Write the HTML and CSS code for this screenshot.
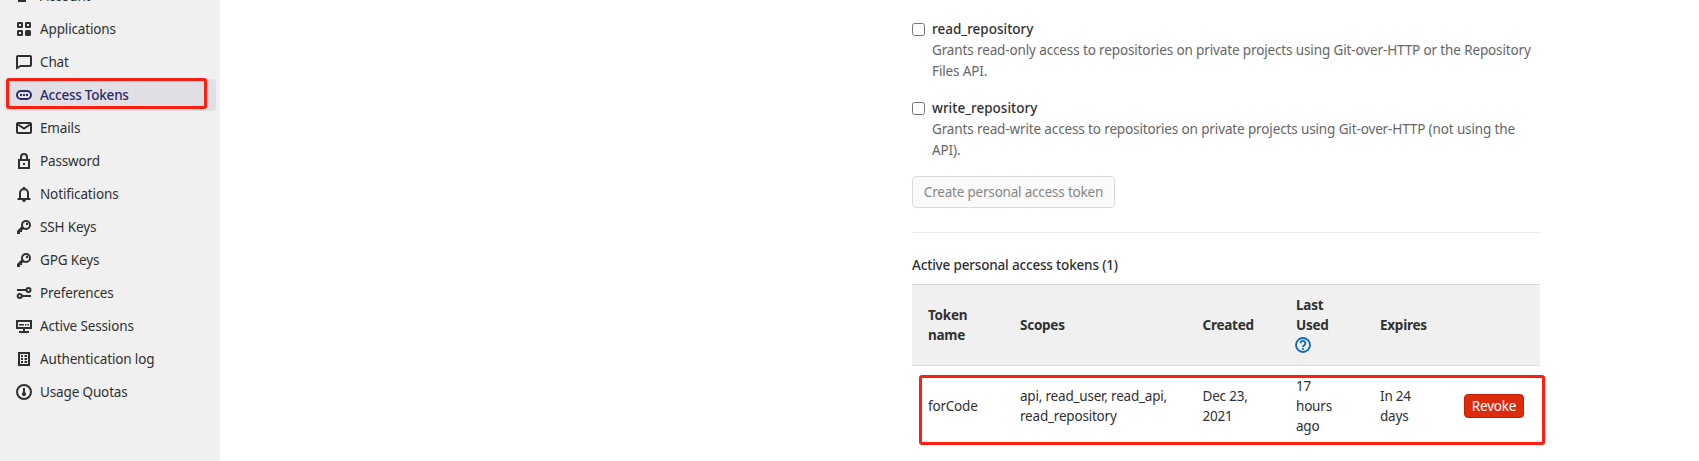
FILE: index.html
```html
<!DOCTYPE html>
<html lang="en">
<head>
<meta charset="utf-8">
<title>Access Tokens</title>
<link rel="stylesheet" href="styles.css">
</head>
<body>
<div class="page">
  <nav class="sidebar">
    <a class="nav-item"><svg class="icon" viewBox="0 0 16 16"><path d="M2 14v-1.500a4 4 0 0 1 4-3.500h4v5z" fill="currentColor"/><circle cx="6" cy="5" r="3" class="line"/></svg><span>Account</span></a>
    <a class="nav-item"><svg class="icon" viewBox="0 0 16 16"><g class="line"><rect x="2" y="2" width="4" height="4" rx=".3"/><rect x="10" y="2" width="4" height="4" rx=".3"/><rect x="2" y="10" width="4" height="4" rx=".3"/></g><rect x="9" y="9" width="6" height="6" rx="1.500" fill="currentColor"/></svg><span>Applications</span></a>
    <a class="nav-item"><svg class="icon" viewBox="0 0 16 16"><path class="line" d="M1 14V3a1 1 0 0 1 1-1h12a1 1 0 0 1 1 1v8a1 1 0 0 1-1 1H4.500z"/></svg><span>Chat</span></a>
    <a class="nav-item active"><svg class="icon" viewBox="0 0 16 16"><rect class="line" x="1" y="4" width="14" height="8" rx="4"/><path d="M4 7h2v2H4zM7 7h2v2H7zM10 7h2v2h-2z" fill="currentColor"/></svg><span>Access Tokens</span></a>
    <a class="nav-item"><svg class="icon" viewBox="0 0 16 16"><rect class="line" x="1" y="3" width="14" height="10" rx="1"/><path class="line" d="M2 4.500 8 8.500 14 4.500"/></svg><span>Emails</span></a>
    <a class="nav-item"><svg class="icon" viewBox="0 0 16 16"><path class="line" d="M3 7h10v8H3zM5 7V4a3 3 0 0 1 6 0v3"/><rect x="7" y="10" width="2" height="2" fill="currentColor"/></svg><span>Password</span></a>
    <a class="nav-item"><svg class="icon" viewBox="0 0 16 16"><path class="line" d="M4 12.500V7a4 4 0 0 1 8 0v5.500M1.500 13h13"/><path d="M7 1h2v2H7zM6 14h4a2 2 0 0 1-4 0" fill="currentColor"/></svg><span>Notifications</span></a>
    <a class="nav-item"><svg class="icon" viewBox="0 0 16 16"><circle class="line" cx="10" cy="6" r="4"/><path d="M6 7 1 12v3h3v-2h2v-2l3-1z" fill="currentColor"/><circle cx="11" cy="5" r="1.200" fill="currentColor"/></svg><span>SSH Keys</span></a>
    <a class="nav-item"><svg class="icon" viewBox="0 0 16 16"><circle class="line" cx="10" cy="6" r="4"/><path d="M6 7 1 12v3h3v-2h2v-2l3-1z" fill="currentColor"/><circle cx="11" cy="5" r="1.200" fill="currentColor"/></svg><span>GPG Keys</span></a>
    <a class="nav-item"><svg class="icon" viewBox="0 0 16 16"><g class="line"><circle cx="12.500" cy="5" r="2"/><circle cx="3.700" cy="11" r="2"/><path d="M1 5h9.700M5.500 11H15"/></g></svg><span>Preferences</span></a>
    <a class="nav-item"><svg class="icon" viewBox="0 0 16 16"><path class="line" d="M1 3h14v7H1zM8 10v4M3 14h10"/><path d="M3 6h5v1.500H3zM9 6h1.500v1.500H9zM11.500 6H13v1.500h-1.500z" fill="currentColor"/></svg><span>Active Sessions</span></a>
    <a class="nav-item"><svg class="icon" viewBox="0 0 16 16"><rect class="line" x="3" y="2" width="10" height="12"/><path d="M5 4h2v2H5zM8.500 4H11v2H8.500zM5 7h2v2H5zM8.500 7H11v2H8.500zM5 10h2v2H5zM8.500 10H11v2H8.500z" fill="currentColor"/></svg><span>Authentication log</span></a>
    <a class="nav-item"><svg class="icon" viewBox="0 0 16 16"><circle class="line" cx="8" cy="8" r="7"/><path d="M7 4h2v4.300a2 2 0 1 1-2 0z" fill="currentColor"/></svg><span>Usage Quotas</span></a>
    <div class="mark mark-nav"></div>
  </nav>
  <main class="content">
    <div class="scope">
      <input type="checkbox" class="check">
      <div><div class="scope-name">read_repository</div><p class="scope-help">Grants read-only access to repositories on private projects using Git-over-HTTP or the Repository<br>Files API.</p></div>
    </div>
    <div class="scope">
      <input type="checkbox" class="check">
      <div><div class="scope-name">write_repository</div><p class="scope-help">Grants read-write access to repositories on private projects using Git-over-HTTP (not using the<br>API).</p></div>
    </div>
    <button class="create" disabled>Create personal access token</button>
    <hr class="rule">
    <h5 class="heading">Active personal access tokens (1)</h5>
    <div class="table">
      <div class="row head">
        <div>Token<br>name</div><div>Scopes</div><div>Created</div>
        <div>Last<br>Used<br><svg class="help" viewBox="0 0 16 16"><circle cx="8" cy="8" r="7"/><path d="M5.700 6.300a2.300 2.300 0 1 1 3.500 1.900Q8 8.800 8 9.900M8 11v1.800"/></svg></div>
        <div>Expires</div><div></div>
      </div>
      <div class="row body">
        <div>forCode</div><div>api, read_user, read_api,<br>read_repository</div><div>Dec 23,<br>2021</div><div>17<br>hours<br>ago</div><div>In 24<br>days</div><div><button class="revoke">Revoke</button></div>
        <div class="mark mark-row"></div>
      </div>
    </div>
  </main>
</div>
</body>
</html>
```
FILE: styles.css
```css
* { box-sizing: border-box; }
body { margin: 0; background: #fff; color: #303030; font: 13.5px/20px "Noto Sans", sans-serif; letter-spacing: -0.14px; overflow: hidden; }
.page { display: flex; height: 461px; overflow: hidden; }
.sidebar { position: relative; flex: none; width: 220px; height: 461px; padding: 0 4px; background: #f0f0f0; overflow: hidden; }
.nav-item { display: flex; align-items: center; gap: 8px; height: 32px; margin-bottom: 1px; padding-left: 12px; border-radius: 4px; }
.nav-item:first-child { margin-top: -20px; }
.nav-item.active { background: #dfdfe4; color: #2f2a6b; font-weight: 550; letter-spacing: -0.23px; }
.icon { flex: none; width: 16px; height: 16px; }
.line { fill: none; stroke: currentColor; stroke-width: 2; }
.mark { position: absolute; border: 3px solid #ff1e12; border-radius: 3px; }
.mark-nav { left: 6px; top: 78px; width: 201px; height: 31px; }
.content { width: 628px; margin-left: 692px; padding-top: 19px; }
.scope { display: flex; gap: 7px; height: 79px; }
.check { flex: none; width: 13px; height: 13px; margin: 4px 0 0; }
.scope-name { height: 21px; line-height: 20px; font-weight: 550; letter-spacing: 0; }
.scope-help { margin: 0; line-height: 21px; color: #666; letter-spacing: -0.13px; white-space: nowrap; }
.create { display: block; width: 203px; height: 32px; margin-top: -1px; padding: 0; border: 1px solid #dbdbdb; border-radius: 4px; background: #fafafa; color: #868686; font: inherit; letter-spacing: -0.2px; }
.rule { height: 1px; margin: 24px 0 22px; border: 0; background: #eaeaea; }
.heading { margin: 0; height: 29px; line-height: 20px; font-size: 13.5px; font-weight: 540; letter-spacing: -0.17px; }
.row { position: relative; display: grid; grid-template-columns: 92px 182.5px 93.5px 84px 84px 92px; align-items: center; }
.row > div:not(.mark) { padding-left: 16px; white-space: nowrap; }
.head { height: 82px; border-top: 1px solid #dbdbdb; border-bottom: 1px solid #dbdbdb; background: #f0f0f0; font-weight: 680; letter-spacing: -0.25px; }
.body { height: 80px; letter-spacing: -0.2px; }
.help { display: block; width: 16px; height: 16px; margin: 2px 0 2px -1px; fill: none; stroke: #1068bf; stroke-width: 1.8; }
.revoke { display: block; width: 60px; height: 24px; padding: 0; border: 1px solid #c91c00; border-radius: 4px; background: #dd2b0e; color: #fff; font: inherit; letter-spacing: -0.2px; }
.mark-row { left: 7px; top: 9px; width: 626px; height: 70px; }
```
